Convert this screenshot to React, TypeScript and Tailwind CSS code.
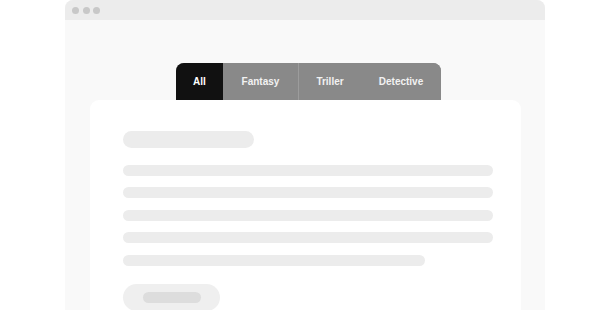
import { useState } from "react";

const tabs = [
  { label: "All", w: "w-[47px]" },
  { label: "Fantasy", w: "w-[75px]" },
  { label: "Triller", w: "w-[63px]" },
  { label: "Detective", w: "w-[80px]" },
];

const lines = ["w-[370px]", "w-[370px]", "w-[370px]", "w-[370px]", "w-[302px]"];

const App = () => {
  const [active, setActive] = useState(0);

  return <div className="h-[310px] w-[610px] overflow-hidden bg-white font-['Liberation_Sans',Arial,sans-serif]">
      <div className="ml-[65px] w-[480px] h-[310px] rounded-t-[8px] bg-[#f9f9f9] overflow-hidden">
        {/* Title bar */}
        <div className="h-[20px] bg-[#ececec] flex items-center pl-[7px] gap-[3.5px]">
          <span className="w-[7px] h-[7px] rounded-full bg-[#c8c8c8]" />
          <span className="w-[7px] h-[7px] rounded-full bg-[#c8c8c8]" />
          <span className="w-[7px] h-[7px] rounded-full bg-[#c8c8c8]" />
        </div>

        <div className="px-[25px] pt-[43px]">
          {/* Tabs */}
          <div className="ml-[86px] flex h-[37px] w-[265px] rounded-t-[8px] overflow-hidden bg-[#898989]">
            {tabs.map((t, i) => <button key={t.label} onClick={() => setActive(i)} className={`${t.w} h-full flex items-center justify-center text-[10px] font-bold ${i === active ? "bg-[#111111] text-white" : "bg-[#898989] text-[#f2f2f2]"} ${i === 2 ? "border-l border-[#9c9c9c]" : ""}`}>
                {t.label}
              </button>)}
          </div>

          {/* Card */}
          <div className="w-[431px] h-[240px] bg-white rounded-[9px] px-[33px] pt-[31px]">
            <div className="w-[131px] h-[17px] rounded-full bg-[#ececec]" />
            <div className="mt-[16.5px] flex flex-col gap-[11.5px]">
              {lines.map((w, i) => <div key={i} className={`${w} h-[11px] rounded-full bg-[#ececec]`} />)}
            </div>
            <div className="mt-[18px] w-[97px] h-[27px] rounded-full bg-[#efefef] flex items-center justify-center">
              <div className="w-[58px] h-[11px] rounded-full bg-[#dddddd]" />
            </div>
          </div>
        </div>
      </div>
    </div>;
};

export default App;
